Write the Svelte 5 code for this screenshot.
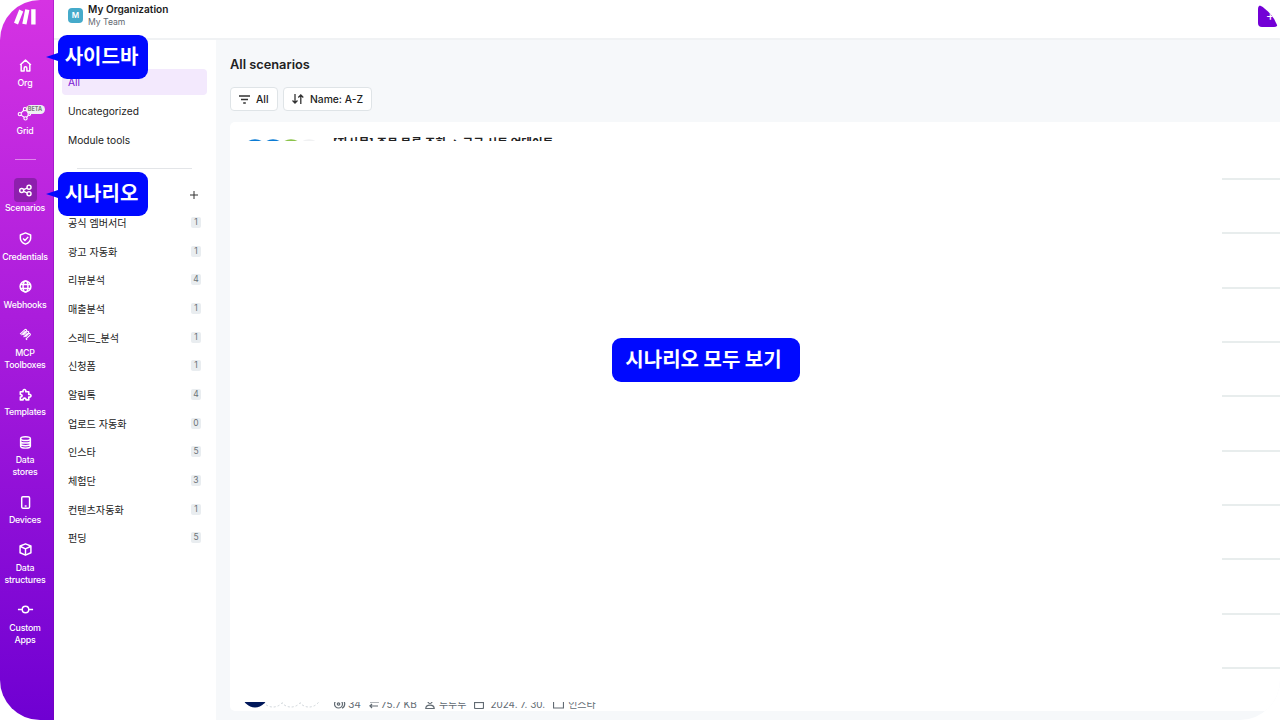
<script>
    const navTop = [
        { icon: 'home', lines: ['Org'] },
        { icon: 'grid', lines: ['Grid'], beta: true },
    ];
    const navMain = [
        { icon: 'share', lines: ['Scenarios'], active: true },
        { icon: 'shield', lines: ['Credentials'] },
        { icon: 'globe', lines: ['Webhooks'] },
        { icon: 'mcp', lines: ['MCP', 'Toolboxes'] },
        { icon: 'puzzle', lines: ['Templates'] },
        { icon: 'database', lines: ['Data', 'stores'] },
        { icon: 'device', lines: ['Devices'] },
        { icon: 'cube', lines: ['Data', 'structures'] },
        { icon: 'commit', lines: ['Custom', 'Apps'] },
    ];
    const filters = ['All', 'Uncategorized', 'Module tools'];
    const folders = [
        { name: '공식 엠버서더', count: 1 },
        { name: '광고 자동화', count: 1 },
        { name: '리뷰분석', count: 4 },
        { name: '매출분석', count: 1 },
        { name: '스레드_분석', count: 1 },
        { name: '신청폼', count: 1 },
        { name: '알림톡', count: 4 },
        { name: '업로드 자동화', count: 0 },
        { name: '인스타', count: 5 },
        { name: '체험단', count: 3 },
        { name: '컨텐츠자동화', count: 1 },
        { name: '펀딩', count: 5 },
    ];
    const rows = Array(10).fill(0);
</script>

{#snippet icon(name)}
    <svg class="icon" viewBox="0 0 24 24">
        {#if name == 'home'}
            <path d="M2 11 12 2l10 9M4 10v12h5.500v-5a2.500 2.500 0 0 1 5 0v5H20V10" />
        {:else if name == 'grid'}
            <g stroke-width="2">
                <circle cx="1.500" cy="13" r="3" />
                <circle cx="11" cy="4" r="3" />
                <circle cx="12" cy="21" r="3" />
                <circle cx="19" cy="13" r="2.500" />
                <path d="m4 11 5-5M4 15l5.500 4M14 19l3.500-4M13.500 6l4 5" />
            </g>
        {:else if name == 'share'}
            <circle cx="5" cy="12" r="3.700" />
            <circle cx="18.500" cy="6" r="3.700" />
            <circle cx="18.500" cy="18" r="3.700" />
            <path d="m8.500 10.500 6.500-3M8.500 13.500l6.500 3" />
        {:else if name == 'shield'}
            <path d="M12 1.500 21.500 5.500v6c0 5.500-4.500 9-9.500 11-5-2-9.500-5.500-9.500-11v-6z" />
            <path d="m7.500 12 3.500 3.500 6-6.500" />
        {:else if name == 'globe'}
            <circle cx="12" cy="12" r="10" />
            <ellipse cx="12" cy="12" rx="4.500" ry="10" />
            <path d="M2.500 8.500h19M2.500 15.500h19" />
        {:else if name == 'mcp'}
            <g stroke-width="2">
                <path d="M2 11.500 11 3c1.500-1.400 4 .5 2.800 2.400L7 12" />
                <path d="m8 13 6.500-6.500c1.600-1.500 4.500.5 3 2.700L11 15.500" />
                <path d="m12 16.500 6-6c1.800-1.500 4 1 2.500 2.600L13 20l2 2" />
                <path d="M4.500 13 12 6M8.500 17l7-7" />
            </g>
        {:else if name == 'puzzle'}
            <path stroke-width="3" d="M2.500 7h5c-1.500-5.500 6.500-5.500 5 0H18v5c5.500-1.300 5.500 6 0 4.800V22h-5c0-4.500-5.500-4.500-5.500 0h-5v-5.500c4.500 0 4.500-4.500 0-4.500z" />
        {:else if name == 'database'}
            <ellipse cx="12" cy="5" rx="9" ry="3.500" />
            <path d="M3 5v14c0 4.500 18 4.500 18 0V5M3 9.700c0 4.500 18 4.500 18 0M3 14.500c0 4.500 18 4.500 18 0" />
        {:else if name == 'device'}
            <rect x="5" y="1.500" width="14.500" height="21" rx="2" />
            <path d="M10.500 18.500h3.500" />
        {:else if name == 'cube'}
            <path d="m12 1.500 10 4v12.500L12 22.500 2 18V5.500zM2 6l10 5 10-5M12 11v11.500" />
        {:else if name == 'commit'}
            <circle cx="12" cy="12" r="6" />
            <path d="M-2 12h8M18 12h8" />
        {/if}
    </svg>
{/snippet}

{#snippet navItem(item)}
    <div class="nav-item">
        <div class="nav-icon" class:active={item.active}>
            {@render icon(item.icon)}
            {#if item.beta}<span class="beta">BETA</span>{/if}
        </div>
        {#each item.lines as line}
            <span>{line}</span>
        {/each}
    </div>
{/snippet}

<div class="app">
    <nav class="sidebar">
        <svg class="logo" viewBox="0 0 22 16">
            <path d="M5.200.5 9.200 2.400 4 15.600 0 13.700z" />
            <path d="m11.200.2 4.200.8-2.900 14.600-4.200-.8z" />
            <path d="M17.200.2h4.400v15.400h-4.400z" />
        </svg>
        <div class="nav-group">
            {#each navTop as item}{@render navItem(item)}{/each}
        </div>
        <div class="nav-line"></div>
        <div class="nav-group main-nav">
            {#each navMain as item}{@render navItem(item)}{/each}
        </div>
    </nav>

    <div class="page">
        <header>
            <div class="team-badge">M</div>
            <div class="org">
                <strong>My Organization</strong>
                <span>My Team</span>
            </div>
            <div class="avatar">+</div>
        </header>

        <div class="content">
            <aside>
                {#each filters as filter, i}
                    <div class="filter" class:selected={i == 0}>{filter}</div>
                {/each}
                <div class="divider"></div>
                <div class="folder-head">
                    <svg viewBox="0 0 8 8"><path d="M4 0v8M0 4h8" /></svg>
                </div>
                {#each folders as folder}
                    <div class="folder">
                        <span>{folder.name}</span>
                        <span class="count">{folder.count}</span>
                    </div>
                {/each}
            </aside>

            <main>
                <h1>All scenarios</h1>
                <div class="tools">
                    <button class="all">
                        <svg width="11" height="9" viewBox="0 0 11 9"><path d="M0 1h11M2 4.500h7M4.200 8h2.600" /></svg>
                        All
                    </button>
                    <button class="sort">
                        <svg width="12" height="10" viewBox="0 0 12 10"><path d="M3 0v9M.5 6.500 3 9l2.500-2.500M8.800 10V1M6.300 3.500 8.800 1l2.500 2.500" /></svg>
                        Name: A-Z
                    </button>
                </div>
                <div class="list">
                    <div class="first">
                        <svg width="90" height="19" viewBox="0 0 90 19">
                            <circle cx="79" cy="29.700" r="12.500" fill="#f0f1f2" />
                            <circle cx="61" cy="29.700" r="12.500" fill="#8bc34a" />
                            <circle cx="43" cy="29.700" r="12.500" fill="#0b7bd4" />
                            <circle cx="25" cy="29.700" r="12.500" fill="#0b7bd4" />
                        </svg>
                        <strong>[자사몰] 주문 목록 조회 → 구글 시트 업데이트</strong>
                    </div>
                    <div class="rows">
                        {#each rows as _}<div class="row"></div>{/each}
                    </div>
                    <div class="last">
                        <svg width="90" height="9" viewBox="0 0 90 9">
                            <g fill="#fff" stroke="#cfd5da" stroke-dasharray="2 2">
                                <circle cx="79" cy="-7" r="12" />
                                <circle cx="61" cy="-7" r="12" />
                                <circle cx="43" cy="-7" r="12" />
                            </g>
                            <circle cx="25" cy="-7" r="12.500" fill="#00175a" />
                        </svg>
                        <div class="meta">
                            <span class="runs">
                                <svg width="12" height="10" viewBox="0 0 12 10"><circle cx="4.500" cy="5" r="4" /><circle cx="4.500" cy="5" r="1.200" /><path d="M8 .8c3.600 1.500 3.600 6.900 0 8.400" /></svg>34
                            </span>
                            <span class="size">
                                <svg width="10" height="10" viewBox="0 0 10 10"><path d="M1 3h8L7 1M9 7H1l2 2M1 7l2-2" /></svg>75.7 KB
                            </span>
                            <span class="user">
                                <svg width="10" height="10" viewBox="0 0 10 10"><circle cx="5" cy="2.500" r="2" /><path d="M.8 9.500C.8 5 9.200 5 9.200 9.500z" /></svg>투투투
                            </span>
                            <span class="date">
                                <svg width="10" height="10" viewBox="0 0 10 10"><rect x=".5" y="1" width="9" height="8.500" rx="1" /><path d="M.5 3.500h9" /></svg>2024. 7. 30.
                            </span>
                            <span class="place">
                                <svg width="11" height="10" viewBox="0 0 11 10"><path d="M.5 1h4l1 1.500h5v6.500H.5z" /></svg>인스타
                            </span>
                        </div>
                    </div>
                </div>
            </main>
        </div>
    </div>

    <div class="callout tail bar">사이드바</div>
    <div class="callout tail scenario">시나리오</div>
    <div class="callout view-all">시나리오 모두 보기</div>
</div>

<style>
    :global(body) {
        background: #fff;
    }

    .app {
        position: relative;
        display: flex;
        width: 1280px;
        height: 720px;
        overflow: hidden;
        border-radius: 40px;
        background: #fff;
        color: #222;
        font-family: Inter, "Noto Sans CJK KR", sans-serif;
    }

    .sidebar {
        box-sizing: border-box;
        display: flex;
        flex-direction: column;
        align-items: center;
        width: 54px;
        padding: 9px 3px 0 0;
        border-right: 1px solid rgba(120, 0, 170, 0.35);
        background: linear-gradient(#d633e3, #a51adb 50%, #6f00d2) border-box;
        color: #fff;
    }

    .logo {
        width: 22px;
        height: 16px;
        margin-bottom: 28px;
        fill: #fff;
    }

    .nav-group {
        display: flex;
        flex-direction: column;
        gap: 12.4px;
    }

    .main-nav {
        gap: 11.85px;
    }

    .main-nav .nav-item:first-child {
        margin-bottom: 0.9px;
    }

    .nav-item {
        display: flex;
        flex-direction: column;
        align-items: center;
        font-size: 8.8px;
        font-weight: 500;
        line-height: 12px;
        letter-spacing: -0.2px;
    }

    .nav-icon {
        position: relative;
        display: flex;
        align-items: center;
        justify-content: center;
        width: 23px;
        height: 24px;
        border-radius: 4px;
    }

    .nav-icon.active {
        background: #8d1fad;
    }

    .icon {
        width: 13px;
        height: 13px;
        margin-left: 1px;
        overflow: visible;
        fill: none;
        stroke: #fff;
        stroke-width: 2.7;
        stroke-linejoin: round;
    }

    .beta {
        position: absolute;
        left: 12px;
        top: 4px;
        width: 19px;
        border-radius: 5px;
        background: #eef0f2;
        color: #777;
        font-size: 5.5px;
        font-weight: 700;
        line-height: 9px;
        letter-spacing: 0;
        text-align: center;
    }

    .nav-line {
        width: 21px;
        height: 1px;
        margin: 21.6px 0 18.2px;
        background: #df87ec;
    }

    .page {
        display: flex;
        flex: 1;
        flex-direction: column;
    }

    header {
        box-sizing: border-box;
        display: flex;
        height: 40px;
        padding: 3px 2px 0 14px;
        border-bottom: 2px solid #f0f2f4;
    }

    .team-badge {
        width: 15px;
        height: 15px;
        margin: 5px 5px 0 0;
        border-radius: 4px;
        background: #45aaca;
        color: #fff;
        font-size: 8px;
        font-weight: 600;
        line-height: 14px;
        text-align: center;
    }

    .org {
        display: flex;
        flex-direction: column;
        font-size: 8.6px;
        line-height: 12px;
        color: #5f6870;
    }

    .org strong {
        color: #1b1b1b;
        font-size: 10.1px;
        font-weight: 600;
        line-height: 13px;
    }

    .avatar {
        box-sizing: border-box;
        width: 20px;
        height: 22px;
        margin: 2px 0 0 auto;
        padding-left: 5px;
        border-radius: 4px;
        background: #7300d6;
        color: #fff;
        font-size: 14px;
        line-height: 19px;
        text-align: center;
    }

    .content {
        display: flex;
        flex: 1;
    }

    aside {
        box-sizing: border-box;
        width: 162px;
        padding: 29px 9px 0 8px;
    }

    .filter {
        height: 26px;
        margin-bottom: 2.8px;
        padding-left: 6px;
        border-radius: 4px;
        font-size: 10.2px;
        line-height: 27px;
    }

    .filter.selected {
        background: #f3e9fd;
        color: #7a12d2;
    }

    .divider {
        height: 1px;
        margin: 15.6px 15px 13px;
        background: #e3e5e8;
    }

    .folder-head {
        display: flex;
        align-items: center;
        justify-content: flex-end;
        height: 26px;
        padding-right: 9px;
    }

    .folder-head svg {
        width: 8px;
        height: 8px;
        stroke: #333;
    }

    .folder {
        display: flex;
        align-items: center;
        justify-content: space-between;
        height: 28.68px;
        padding: 0 6px;
        font-size: 10.1px;
        color: #222;
    }

    .count {
        width: 10px;
        border-radius: 2px;
        background: #e9edf0;
        color: #6b7277;
        font-size: 8.5px;
        line-height: 11px;
        text-align: center;
    }

    main {
        flex: 1;
        padding: 16px 0 0 14px;
        background: #f6f8fa;
    }

    h1 {
        margin: 0 0 14px;
        font-size: 12.8px;
        font-weight: 600;
        line-height: 18px;
    }

    .tools {
        display: flex;
        gap: 5px;
        margin-bottom: 11px;
    }

    button {
        display: flex;
        align-items: center;
        box-sizing: border-box;
        height: 24px;
        margin: -1px 0 0;
        padding: 0 8px;
        border: 1px solid #dfe4e7;
        border-radius: 4px;
        background: #fff;
        color: #222;
        font: 500 10.3px Inter, sans-serif;
    }

    .all {
        gap: 6px;
        width: 48px;
    }

    .sort {
        gap: 6px;
        width: 89px;
    }

    button svg {
        flex: none;
        fill: none;
        stroke: #333;
        stroke-width: 1.3;
    }

    .list {
        height: 589px;
        border-radius: 5px 0 0 5px;
        background: #fff;
        overflow: hidden;
    }

    .first {
        display: flex;
        height: 19px;
        overflow: hidden;
    }

    .first strong {
        margin: 13px 0 0 13px;
        font-size: 11.6px;
        font-weight: 700;
        line-height: 16px;
        white-space: nowrap;
    }

    .rows {
        height: 561px;
        padding-left: 992px;
    }

    .row {
        height: 54.32px;
        box-sizing: border-box;
        border-bottom: 2px solid #e8eded;
    }

    .row:first-child {
        height: 39px;
    }

    .last {
        display: flex;
        height: 9px;
        overflow: hidden;
    }

    .meta {
        display: flex;
        gap: 8px;
        margin: -6px 0 0 14px;
        color: #626b73;
        font-size: 10.3px;
        line-height: 16px;
        white-space: nowrap;
    }

    .meta span {
        display: flex;
        align-items: center;
        height: 16px;
        gap: 2px;
    }

    .meta .size {
        font-size: 10px;
    }

    .meta .user,
    .meta .place {
        gap: 4px;
        font-size: 10px;
    }

    .meta .date {
        gap: 6px;
        font-size: 9.9px;
    }

    .meta svg {
        fill: none;
        stroke: #626b73;
        stroke-width: 1.2;
    }

    .callout {
        position: absolute;
        box-sizing: border-box;
        height: 44px;
        padding-right: 3px;
        border-radius: 9px;
        background: #0009ff;
        color: #fff;
        font-family: "Noto Sans CJK KR", sans-serif;
        font-size: 20px;
        font-weight: 700;
        line-height: 42px;
        text-align: center;
        white-space: nowrap;
    }

    .tail {
        left: 58px;
        width: 90px;
    }

    .tail::before {
        content: '';
        position: absolute;
        left: -12px;
        top: 18px;
        border: solid transparent;
        border-width: 4px 12px 4px 0;
        border-right-color: #0009ff;
    }

    .bar {
        top: 35px;
    }

    .scenario {
        top: 172px;
    }

    .view-all {
        left: 612px;
        top: 338px;
        width: 188px;
        padding-right: 5px;
    }
</style>
